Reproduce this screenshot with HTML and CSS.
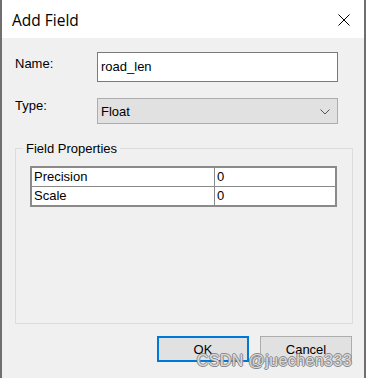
FILE: index.html
```html
<!DOCTYPE html>
<html lang="en">
<head>
    <meta charset="UTF-8">
    <title>Add Field</title>
    <link rel="stylesheet" href="styles.css">
</head>
<body>
    <div class="window">
        <div class="titlebar">
            <span class="title">Add Field</span>
            <svg class="close" width="12" height="12" viewBox="0 0 12 12">
                <path d="M0.5 0.5 L11.5 11.5 M11.5 0.5 L0.5 11.5" stroke="#000" stroke-width="1" fill="none"/>
            </svg>
        </div>
        <div class="content">
            <div class="row row-name">
                <label class="lbl">Name:</label>
                <div class="textbox">road_len</div>
            </div>
            <div class="row row-type">
                <label class="lbl">Type:</label>
                <div class="combo">
                    <span>Float</span>
                    <svg width="10" height="6" viewBox="0 0 10 6">
                        <path d="M0.5 0.5 L5 5 L9.5 0.5" stroke="#555" stroke-width="1" fill="none"/>
                    </svg>
                </div>
            </div>
            <div class="group">
                <span class="legend">Field Properties</span>
                <table class="props">
                    <tr><td class="key">Precision</td><td>0</td></tr>
                    <tr><td class="key">Scale</td><td>0</td></tr>
                </table>
            </div>
            <div class="buttons">
                <div class="btn btn-default">OK</div>
                <div class="btn">Cancel</div>
            </div>
            <span class="watermark">CSDN @juechen333</span>
        </div>
    </div>
</body>
</html>
```

FILE: styles.css
```css
body {
    margin: 0;
    padding: 0;
    background-color: #f0f0f0;
    font-family: "Liberation Sans", Arial, sans-serif;
}

.window {
    width: 366px;
    height: 378px;
    box-sizing: border-box;
    border-left: 2px solid #6f6f6f;
    border-right: 2px solid #6f6f6f;
    display: flex;
    flex-direction: column;
}

.titlebar {
    height: 38px;
    background-color: #fff;
    display: flex;
    align-items: center;
    justify-content: space-between;
    padding: 0 14px 0 10px;
    flex-shrink: 0;
}

.title {
    font-family: "Open Sans", sans-serif;
    font-size: 15.5px;
    color: #000;
    margin-top: 1px;
}

.close {
    margin-top: 1px;
}

.content {
    flex: 1;
    background-color: #f0f0f0;
    padding: 14px 11px 0 13px;
    position: relative;
    font-size: 13px;
    color: #000;
}

.row {
    display: flex;
    align-items: flex-start;
}

.lbl {
    width: 82px;
    flex-shrink: 0;
}

.row-name .lbl {
    padding-top: 4px;
}

.textbox {
    width: 241px;
    height: 30px;
    box-sizing: border-box;
    border: 1px solid #7a7a7a;
    background-color: #fff;
    padding: 6px 0 0 3px;
}

.row-type {
    margin-top: 16px;
}

.combo {
    width: 241px;
    height: 26px;
    box-sizing: border-box;
    border: 1px solid #adadad;
    background-color: #e1e1e1;
    display: flex;
    align-items: center;
    justify-content: space-between;
    padding: 1px 7px 0 3px;
}

.group {
    margin-top: 24px;
    width: 338px;
    height: 176px;
    box-sizing: border-box;
    border: 1px solid #dcdcdc;
    position: relative;
    padding: 17px 0 0 14px;
}

.legend {
    position: absolute;
    top: -8px;
    left: 7px;
    padding: 0 3px;
    background-color: #f0f0f0;
}

.props {
    border-collapse: collapse;
    width: 307px;
    background-color: #fff;
    border: 2px solid #8a8a8a;
}

.props td {
    border: 1px solid #8a8a8a;
    height: 18px;
    padding: 0 2px;
    line-height: 16px;
}

.props .key {
    width: 178px;
}

.buttons {
    display: flex;
    justify-content: flex-end;
    gap: 11px;
    margin-top: 12px;
    padding-right: 1px;
}

.btn {
    width: 92px;
    height: 26px;
    box-sizing: border-box;
    border: 1px solid #adadad;
    background-color: #e1e1e1;
    display: flex;
    align-items: center;
    justify-content: center;
    padding-top: 1px;
}

.btn-default {
    border: 2px solid #0078d7;
}

.watermark {
    position: absolute;
    right: 12px;
    bottom: 8px;
    font-size: 16px;
    color: rgba(235, 235, 235, 0.85);
    text-shadow: -1px 0 0 #8a8a8a, 1px 0 0 #8a8a8a, 0 -1px 0 #8a8a8a, 0 1px 0 #8a8a8a;
    letter-spacing: 0.4px;
}
```
